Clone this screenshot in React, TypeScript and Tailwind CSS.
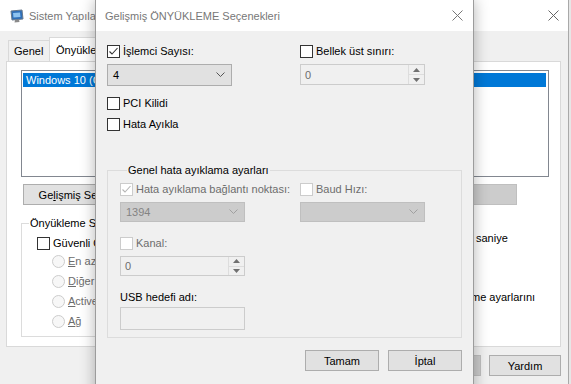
import React from 'react';

const FONT = { fontFamily: '"Liberation Sans", Arial, sans-serif' };

function Check({ checked, disabled }: { checked?: boolean; disabled?: boolean }) {
  return (
    <span
      className={`inline-flex h-[13px] w-[13px] shrink-0 items-center justify-center border bg-white ${
        disabled ? 'border-[#cccccc]' : 'border-[#333333]'
      }`}
    >
      {checked && (
        <svg width="11" height="11" viewBox="0 0 11 11">
          <path d="M1.5 5.5 L4 8 L9.5 2" fill="none" stroke={disabled ? '#b5b5b5' : '#333333'} strokeWidth="1.1" />
        </svg>
      )}
    </span>
  );
}

function CheckRow({ label, checked, disabled }: { label: string; checked?: boolean; disabled?: boolean }) {
  return (
    <div className="flex h-[14px] items-center">
      <Check checked={checked} disabled={disabled} />
      <span className={`ml-[3px] leading-[14px] ${disabled ? 'text-[#6d6d6d]' : 'text-black'}`}>{label}</span>
    </div>
  );
}

function Chevron({ color }: { color: string }) {
  return (
    <svg width="9" height="6" viewBox="0 0 9 6">
      <path d="M0.5 0.5 L4.5 4.5 L8.5 0.5" fill="none" stroke={color} strokeWidth="1" />
    </svg>
  );
}

function Select({ value, disabled, h }: { value: string; disabled?: boolean; h: string }) {
  return (
    <div
      className={`flex w-[125px] items-center justify-between border pl-[5px] pr-[6px] ${h} ${
        disabled ? 'border-[#bfbfbf] bg-[#cccccc] text-[#838383]' : 'border-[#adadad] bg-[#e1e1e1] text-black'
      }`}
    >
      <span>{value}</span>
      <Chevron color={disabled ? '#a0a0a0' : '#555555'} />
    </div>
  );
}

function Spin({ value, h }: { value: string; h: string }) {
  return (
    <div className={`flex w-[125px] border border-[#cccccc] bg-[#f0f0f0] ${h}`}>
      <span className="flex flex-1 items-center pl-[4px] text-[#6d6d6d]">{value}</span>
      <div className="flex w-[16px] flex-col border-l border-[#dddddd]">
        <div className="flex flex-1 items-center justify-center border-b border-[#dddddd]">
          <svg width="7" height="4" viewBox="0 0 7 4">
            <path d="M0 4 L3.5 0 L7 4 Z" fill="#707070" />
          </svg>
        </div>
        <div className="flex flex-1 items-center justify-center">
          <svg width="7" height="4" viewBox="0 0 7 4">
            <path d="M0 0 L3.5 4 L7 0 Z" fill="#707070" />
          </svg>
        </div>
      </div>
    </div>
  );
}

function CloseX({ color }: { color: string }) {
  return (
    <svg width="11" height="11" viewBox="0 0 11 11">
      <path d="M0.5 0.5 L10.5 10.5 M10.5 0.5 L0.5 10.5" stroke={color} strokeWidth="1" />
    </svg>
  );
}

function Radio({ label }: { label: React.ReactNode }) {
  return (
    <div className="flex h-[20px] items-center">
      <span className="h-[13px] w-[13px] rounded-full border border-[#cccccc] bg-[#f7f7f7]" />
      <span className="ml-[3px] text-[#6d6d6d]">{label}</span>
    </div>
  );
}

function WinButton({ children, disabled, w }: { children?: React.ReactNode; disabled?: boolean; w: string }) {
  return (
    <div
      className={`flex h-[21px] shrink-0 items-center justify-center border ${w} ${
        disabled ? 'border-[#bfbfbf] bg-[#cccccc] text-[#838383]' : 'border-[#adadad] bg-[#e1e1e1] text-black'
      }`}
    >
      {children}
    </div>
  );
}

function BackgroundWindow() {
  return (
    <div className="flex h-full w-[569px] flex-col border-r border-[#a9a9a9] bg-[#f0f0f0]">
      <div className="flex h-[31px] shrink-0 items-center bg-white pl-[10px] pr-[9px]">
        <svg width="14" height="14" viewBox="0 0 14 14">
          <path d="M1 2 L12 1 L13 10 L2 11 Z" fill="#2f6fb8" stroke="#6a7a8c" strokeWidth="1" />
          <path d="M3 4 L10 3.5 L10.5 8 L3.5 8.5 Z" fill="#8ec3f0" />
          <path d="M5 11 L9 10.6 L9.5 13 L4.5 13.4 Z" fill="#8a8a8a" />
        </svg>
        <span className="ml-[5px] text-[#777777]">Sistem Yapılandırması</span>
        <div className="flex-1" />
        <CloseX color="#666666" />
      </div>

      <div className="flex flex-col pl-[6px] pr-[7px] pt-[6px]">
        <div className="flex items-end pl-[2px]">
          <div className="flex h-[21px] w-[42px] items-center border border-b-0 border-[#d9d9d9] pl-[5px]">Genel</div>
          <div className="-ml-[1px] -mb-[1px] flex h-[25px] w-[70px] items-center border border-b-0 border-[#d9d9d9] bg-white pl-[6px]">
            Önyükleme
          </div>
          <div className="h-[21px] w-[50px] border border-b-0 border-[#d9d9d9] pl-[5px] leading-[20px]">Hizmetler</div>
        </div>

        <div className="flex h-[286px] flex-col overflow-hidden border border-[#d9d9d9] bg-white pl-[14px] pr-[11px] pt-[8px]">
          <div className="h-[107px] w-[528px] shrink-0 border border-[#828790] p-[2px] pl-[1px]">
            <div className="h-[14px] overflow-hidden whitespace-nowrap bg-[#0078d7] pl-[3px] leading-[14px] text-white">
              Windows 10 (C:\WINDOWS) : Geçerli işletim sistemi; Varsayılan işletim sistemi
            </div>
          </div>

          <div className="mt-[7px] flex h-[21px] gap-[8px] pl-[2px]">
            <WinButton w="w-[140px]">
              Ge<span className="underline">l</span>işmiş Seçenekler...
            </WinButton>
            <WinButton w="w-[150px]">Varsayılan olarak ayarla</WinButton>
            <div className="w-[69px] shrink-0" />
            <WinButton w="w-[111px]" disabled>
              Sil
            </WinButton>
          </div>

          <div className="mt-[11px] flex">
            <fieldset className="h-[121px] w-[260px] shrink-0 border border-[#dcdcdc] pl-[15px]">
              <legend className="-ml-[8px] px-[1px] leading-[14px]">Önyükleme Seçenekleri</legend>
              <div className="mt-[6px]">
                <CheckRow label="Güvenli Önyükleme" />
              </div>
              <div className="mt-[1px] pl-[15px]">
                <Radio label={<><span className="underline">E</span>n az</>} />
                <Radio label={<><span className="underline">D</span>iğer kabuk</>} />
                <Radio label={<><span className="underline">A</span>ctive Directory onarımı</>} />
                <Radio label={<><span className="underline">A</span>ğ</>} />
              </div>
            </fieldset>

            <div className="ml-[130px] flex flex-col">
              <span className="-ml-[37px] leading-[12px]">Zaman aşımı:</span>
              <div className="-ml-[37px] flex items-center whitespace-nowrap">
                <div className="h-[20px] w-[96px] shrink-0 border border-[#7a7a7a] pl-[4px] leading-[18px]">30</div>
                <span className="ml-[6px]">saniye</span>
              </div>
              <div className="mt-[42px] -ml-[19px] flex items-center whitespace-nowrap">
                <Check />
                <span className="ml-[3px]">Tüm önyükleme ayarlarını</span>
              </div>
            </div>
          </div>
        </div>

        <div className="mt-[8px] flex justify-end gap-[8px]">
          <WinButton w="w-[73px]">Tamam</WinButton>
          <WinButton w="w-[73px]">İptal</WinButton>
          <WinButton w="w-[73px]" disabled>
            Uygula
          </WinButton>
          <WinButton w="w-[72px]">Yardım</WinButton>
        </div>
      </div>
    </div>
  );
}

function BootDialog() {
  return (
    <div className="absolute left-[95px] top-0 flex h-[400px] w-[379px] flex-col border-x border-[#9c9c9c] bg-[#f0f0f0] shadow-[0_0_14px_rgba(0,0,0,0.3)]">
      <div className="flex h-[31px] shrink-0 items-center bg-white pl-[9px] pr-[10px]">
        <span className="text-[#777777]">Gelişmiş ÖNYÜKLEME Seçenekleri</span>
        <div className="flex-1" />
        <CloseX color="#777777" />
      </div>

      <div className="flex flex-col px-[11px] pt-[13px]">
        <div className="grid grid-cols-[193px_1fr]">
          <div className="flex flex-col">
            <CheckRow label="İşlemci Sayısı:" checked />
            <div className="mt-[6px]">
              <Select value="4" h="h-[22px]" />
            </div>
          </div>
          <div className="flex flex-col">
            <CheckRow label="Bellek üst sınırı:" />
            <div className="mt-[6px]">
              <Spin value="0" h="h-[21px]" />
            </div>
          </div>
        </div>

        <div className="mt-[10px]">
          <CheckRow label="PCI Kilidi" />
        </div>
        <div className="mt-[7px]">
          <CheckRow label="Hata Ayıkla" />
        </div>

        <fieldset className="mt-[32px] border border-[#dcdcdc] pb-[7px] pl-[12px] pr-[12px]">
          <legend className="ml-[7px] px-[1px] leading-[14px]">Genel hata ayıklama ayarları</legend>
          <div className="mt-[5px] grid grid-cols-[180px_1fr]">
            <div className="flex flex-col">
              <CheckRow label="Hata ayıklama bağlantı noktası:" checked disabled />
              <div className="mt-[6px]">
                <Select value="1394" disabled h="h-[20px]" />
              </div>
            </div>
            <div className="flex flex-col">
              <CheckRow label="Baud Hızı:" disabled />
              <div className="mt-[6px]">
                <Select value="" disabled h="h-[20px]" />
              </div>
            </div>
          </div>

          <div className="mt-[14px]">
            <CheckRow label="Kanal:" disabled />
          </div>
          <div className="mt-[6px]">
            <Spin value="0" h="h-[20px]" />
          </div>

          <div className="mt-[14px] leading-[14px]">USB hedefi adı:</div>
          <div className="mt-[3px] h-[23px] w-[125px] border border-[#cccccc] bg-[#f0f0f0]" />
        </fieldset>

        <div className="mt-[12px] flex justify-end gap-[9px]">
          <WinButton w="w-[74px]">Tamam</WinButton>
          <WinButton w="w-[74px]">İptal</WinButton>
        </div>
      </div>
    </div>
  );
}

export default function App() {
  return (
    <div className="relative h-[384px] w-[571px] overflow-hidden bg-[#e6e6e6] text-[11px] leading-[14px]" style={FONT}>
      <BackgroundWindow />
      <BootDialog />
    </div>
  );
}
